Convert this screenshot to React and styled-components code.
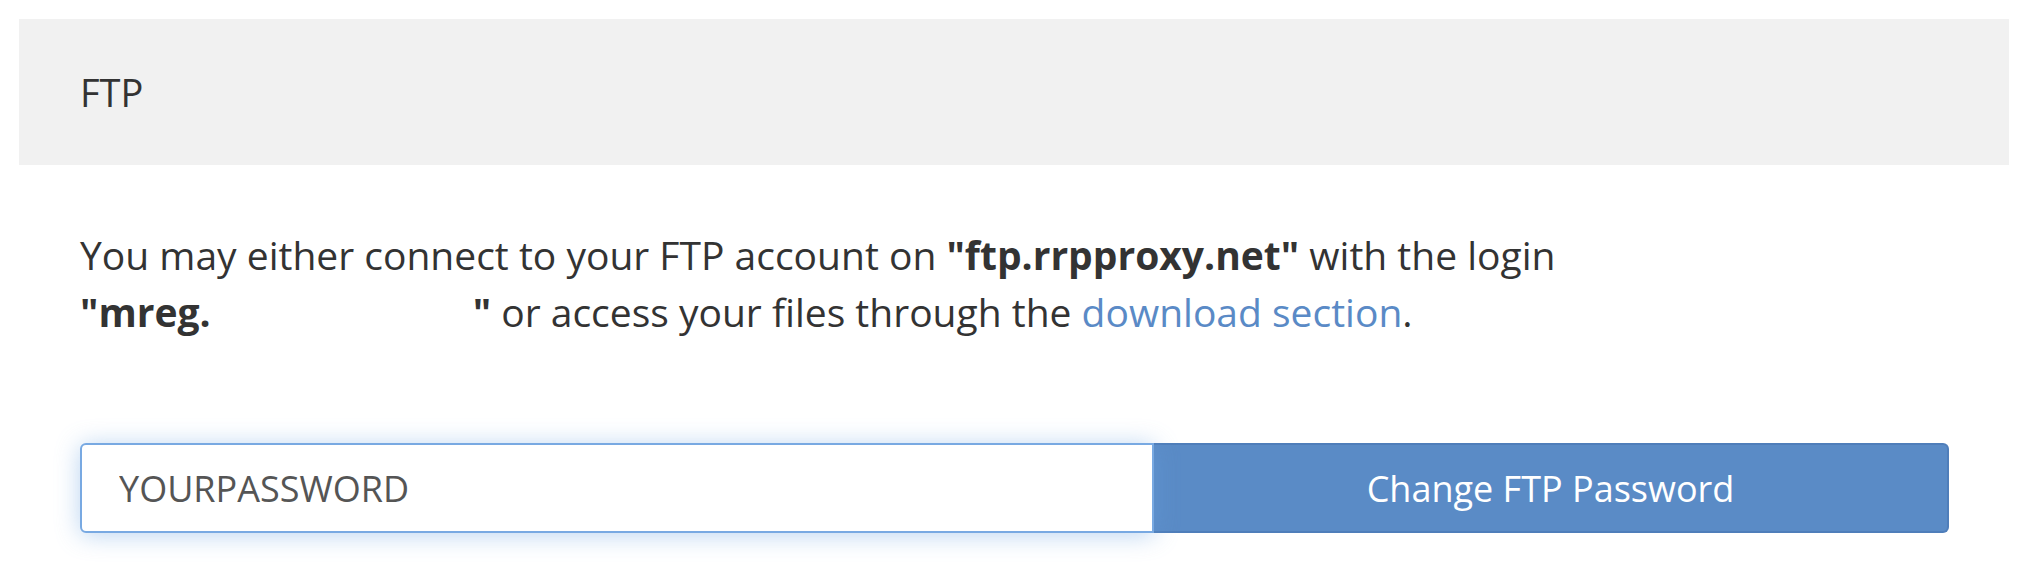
import React from 'react';
import styled, { createGlobalStyle } from 'styled-components';

const GlobalStyle = createGlobalStyle`
    html, body {
        margin: 0;
        padding: 0;
        background: #fff;
    }
    body {
        font-family: "Open Sans", "DejaVu Sans", sans-serif;
        color: #333;
    }
`;

const Page = styled.div`
    padding: 19px 17px 40px 19px;
`;

const Panel = styled.section`
    background: #fff;
`;

const PanelHeading = styled.div`
    display: flex;
    align-items: center;
    height: 146px;
    padding: 0 61px;
    background: #f1f1f1;
    font-size: 38px;
    color: #333;
`;

const PanelBody = styled.div`
    padding: 61px 60px 0 61px;
`;

const Intro = styled.p`
    margin: 0;
    max-width: 1600px;
    font-size: 39px;
    line-height: 57px;
    color: #333;
`;

const Nowrap = styled.span`
    white-space: nowrap;
`;

const Redacted = styled.span`
    display: inline-block;
    width: 262px;
`;

const DownloadLink = styled.a`
    color: #5a8ac6;
    text-decoration: none;
`;

const PasswordForm = styled.form`
    display: grid;
    grid-template-columns: 1fr 795px;
    margin-top: 103px;
    height: 90px;
`;

const PasswordInput = styled.input`
    box-sizing: border-box;
    height: 100%;
    padding: 0 37px;
    border: 2px solid #78a9e2;
    border-radius: 6px 0 0 6px;
    box-shadow: 0 2px 24px rgba(102, 160, 225, 0.45);
    font-family: "Open Sans", sans-serif;
    font-size: 36px;
    color: #555;
    outline: none;
    position: relative;
    z-index: 1;
`;

const SubmitButton = styled.button`
    box-sizing: border-box;
    height: 100%;
    border: 2px solid #4f7eba;
    border-left: none;
    border-radius: 0 6px 6px 0;
    background: #5a8bc6;
    color: #fff;
    font-family: "Open Sans", sans-serif;
    font-size: 36px;
    cursor: pointer;
`;

export default function App() {
    return (
        <Page>
            <GlobalStyle />
            <Panel>
                <PanelHeading>FTP</PanelHeading>
                <PanelBody>
                    <Intro>
                        You may either connect to your FTP account on <b>"ftp.rrpproxy.net"</b> with the login{' '}
                        <Nowrap>
                            <b>"mreg.<Redacted />"</b>
                        </Nowrap>{' '}
                        or access your files through the <DownloadLink href="#">download section</DownloadLink>.
                    </Intro>
                    <PasswordForm onSubmit={(e) => e.preventDefault()}>
                        <PasswordInput type="text" defaultValue="YOURPASSWORD" />
                        <SubmitButton type="submit">Change FTP Password</SubmitButton>
                    </PasswordForm>
                </PanelBody>
            </Panel>
        </Page>
    );
}
